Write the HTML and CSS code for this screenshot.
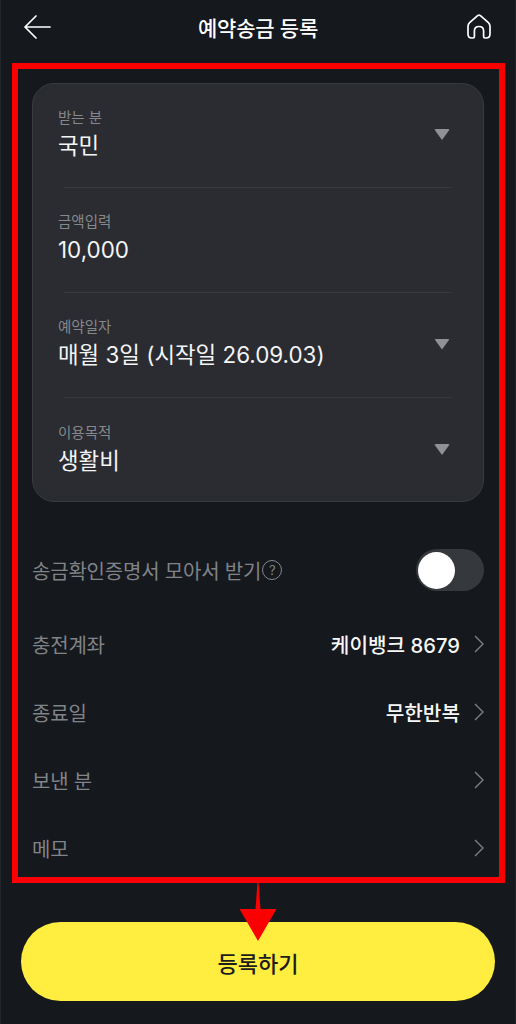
FILE: index.html
```html
<!doctype html>
<html lang="ko">
  <head>
    <title>예약송금 등록</title>
    <link rel="stylesheet" href="styles.css">
  </head>
  <body>
    <div class="screen">
      <header class="top-bar">
        <svg class="back-icon" width="30" height="26" viewBox="0 0 30 26">
          <path d="M13 2 L2 13 L13 24 M2 13 H27" />
        </svg>
        <h1 class="title">예약송금 등록</h1>
        <svg class="home-icon" width="26" height="26" viewBox="0 0 26 26">
          <path d="M12.6 2.6 Q14 1.6 15.4 2.6 L23.4 9.6 Q25 11 25 13.5 V21 Q25 25 21 25 H20 Q18.6 25 18.6 23.6 V18 Q18.6 13.5 14 13.5 Q9.4 13.5 9.4 18 V23.6 Q9.4 25 8 25 H7 Q3 25 3 21 V13.5 Q3 11 4.6 9.6 Z" />
        </svg>
      </header>

      <main class="content">
        <section class="card">
          <div class="field">
            <div class="field-text">
              <div class="field-label">받는 분</div>
              <div class="field-value">국민</div>
            </div>
            <span class="caret"></span>
          </div>
          <div class="field">
            <div class="field-text">
              <div class="field-label">금액입력</div>
              <div class="field-value">10,000</div>
            </div>
          </div>
          <div class="field">
            <div class="field-text">
              <div class="field-label">예약일자</div>
              <div class="field-value">매월 3일 (시작일 26.09.03)</div>
            </div>
            <span class="caret"></span>
          </div>
          <div class="field">
            <div class="field-text">
              <div class="field-label">이용목적</div>
              <div class="field-value">생활비</div>
            </div>
            <span class="caret"></span>
          </div>
        </section>

        <section class="options">
          <div class="option option-toggle">
            <div class="option-name">
              송금확인증명서 모아서 받기
              <span class="help">?</span>
            </div>
            <div class="toggle"><span class="knob"></span></div>
          </div>
          <div class="option">
            <div class="option-name">충전계좌</div>
            <div class="option-value">케이뱅크 8679</div>
            <svg class="chevron" width="10" height="18" viewBox="0 0 10 18"><path d="M1 1 L9 9 L1 17" /></svg>
          </div>
          <div class="option">
            <div class="option-name">종료일</div>
            <div class="option-value">무한반복</div>
            <svg class="chevron" width="10" height="18" viewBox="0 0 10 18"><path d="M1 1 L9 9 L1 17" /></svg>
          </div>
          <div class="option">
            <div class="option-name">보낸 분</div>
            <svg class="chevron" width="10" height="18" viewBox="0 0 10 18"><path d="M1 1 L9 9 L1 17" /></svg>
          </div>
          <div class="option">
            <div class="option-name">메모</div>
            <svg class="chevron" width="10" height="18" viewBox="0 0 10 18"><path d="M1 1 L9 9 L1 17" /></svg>
          </div>
        </section>
      </main>

      <button class="submit">등록하기</button>

      <!-- red annotation drawn over the screenshot -->
      <div class="mark-box"></div>
      <svg class="mark-arrow" width="38" height="60" viewBox="0 0 38 60">
        <path d="M18.4 0 H19.6 L21.5 26 H37.5 L19 58 L0.5 26 H16.5 Z" />
      </svg>
    </div>
  </body>
</html>
```
FILE: styles.css
```css
* {
  box-sizing: border-box;
}

body {
  margin: 0;
  background-color: #15181c;
  font-family: Inter, "Noto Sans CJK KR", "Noto Sans", sans-serif;
}

.screen {
  position: relative;
  width: 516px;
  height: 1024px;
  overflow: hidden;
  border: 1px solid #22262a;
  border-width: 0 1px;
}

/* top bar */
.top-bar {
  display: flex;
  align-items: center;
  justify-content: space-between;
  height: 53px;
  padding: 0 24px 0 22px;
}

.title {
  margin: 0 2px 0 0;
  font-size: 21px;
  font-weight: 500;
  color: #fff;
  letter-spacing: -0.2px;
}

.back-icon path,
.home-icon path {
  fill: none;
  stroke: #fff;
  stroke-width: 1.7;
  stroke-linecap: round;
  stroke-linejoin: round;
}

.home-icon {
  margin-bottom: 1px;
}

/* content */
.content {
  padding: 30px 31px 0;
}

.card {
  height: 419px;
  padding: 0 31px 0 25px;
  background-color: #2a2c31;
  border: 1px solid #383b40;
  border-radius: 22px;
}

.field {
  display: flex;
  align-items: center;
  justify-content: space-between;
  height: 105px;
  padding: 0 0 1px 0;
  border-bottom: 1px solid #35383d;
  margin-left: 6px;
}

.field:first-child {
  height: 104px;
}

.field:last-child {
  border-bottom: 0;
}

.field-text {
  margin-left: -6px;
}

.field-label {
  font-size: 14.5px;
  line-height: 18px;
  color: #85888c;
}

.field-value {
  margin-top: 3px;
  font-size: 22.4px;
  line-height: 32px;
  color: #f4f4f5;
}

.caret {
  width: 16px;
  height: 11px;
  margin: 0 2px 1px 0;
  background-color: #8f9196;
  clip-path: polygon(0 0, 100% 0, 50% 100%);
  border-radius: 2px;
}

/* option rows */
.options {
  margin-top: 34px;
}

.option {
  display: flex;
  align-items: center;
  height: 68px;
}

.option-toggle {
  margin-bottom: 6px;
}

.option-name {
  display: flex;
  align-items: center;
  flex: 1;
  gap: 1px;
  font-size: 20px;
  letter-spacing: -0.2px;
  color: #808388;
}

.option-value {
  font-size: 20.2px;
  font-weight: 500;
  color: #f7f7f7;
}

.chevron {
  margin-left: 14px;
}

.chevron path {
  fill: none;
  stroke: #808388;
  stroke-width: 1.3;
}

.help {
  display: inline-flex;
  align-items: center;
  justify-content: center;
  width: 20px;
  height: 20px;
  border: 1.5px solid #85888c;
  border-radius: 50%;
  font-size: 13px;
  line-height: 1;
}

.toggle {
  display: flex;
  align-items: center;
  width: 68px;
  height: 42px;
  padding-left: 2px;
  background-color: #35383c;
  border-radius: 21px;
}

.knob {
  width: 37px;
  height: 37px;
  background-color: #fff;
  border-radius: 50%;
}

.submit {
  position: absolute;
  left: 20px;
  top: 922px;
  width: 474px;
  height: 79px;
  background-color: #ffee40;
  border: 0;
  border-radius: 40px;
  font-family: inherit;
  font-size: 22px;
  font-weight: 500;
  color: #1c1c1c;
}

/* annotation */
.mark-box {
  position: absolute;
  left: 11px;
  top: 63px;
  width: 493px;
  height: 820px;
  border: 6px solid #fa0000;
}

.mark-arrow {
  position: absolute;
  left: 238px;
  top: 883px;
}

.mark-arrow path {
  fill: #fa0000;
}
```
